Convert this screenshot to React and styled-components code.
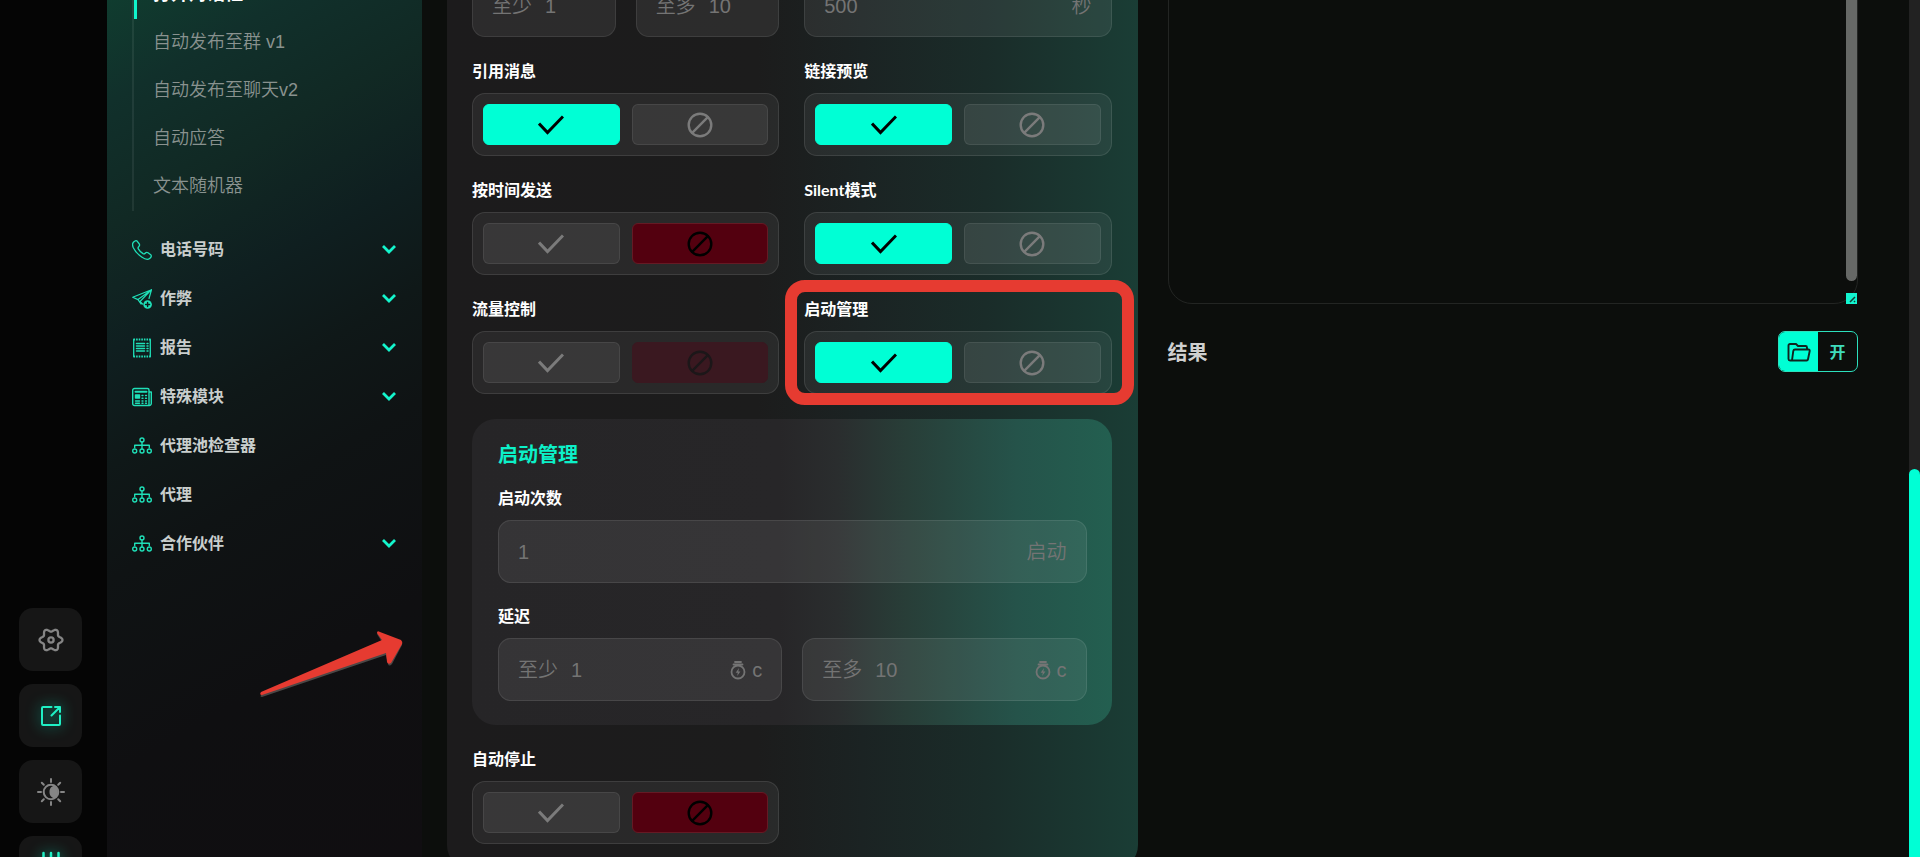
import { useState } from "react";
import styled, { createGlobalStyle, css } from "styled-components";

const GlobalStyle = createGlobalStyle`
  * {
    box-sizing: border-box;
  }
  body {
    margin: 0;
    background: #0c0e0c;
    color: #fff;
    font-family: "Lato", "Noto Sans CJK SC", sans-serif;
    line-height: 1.2;
    overflow: hidden;
  }
  button, input, textarea {
    font-family: inherit;
    line-height: inherit;
    color: inherit;
  }
`;

const thinFont = css`
  font-family: "Liberation Sans", "Noto Sans CJK SC", sans-serif;
  font-weight: 350;
`;

const Page = styled.div`
  display: flex;
  height: 100vh;
  overflow: hidden;
`;

/* left rail */
const Rail = styled.nav`
  flex: 0 0 107px;
  display: flex;
  flex-direction: column;
  justify-content: flex-end;
  background: #050505;
  padding-left: 19px;
`;

const RailList = styled.div`
  display: flex;
  flex-direction: column;
  gap: 13px;
  margin-bottom: -42px;
`;

const RailButton = styled.button`
  display: flex;
  align-items: center;
  justify-content: center;
  width: 63px;
  height: 63px;
  padding: 0;
  border: none;
  border-radius: 14px;
  background: #161616;
  color: ${(props) => (props.$active ? "#1fefc4" : "#858585")};
  cursor: pointer;
  svg {
    filter: ${(props) =>
      props.$active ? "drop-shadow(0 0 7px rgba(0, 255, 210, 0.7))" : "none"};
  }
`;

/* menu */
const Sidebar = styled.aside`
  position: relative;
  flex: 0 0 315px;
  padding: 0 26px 0 25px;
  background: linear-gradient(
    150deg,
    #103c2f 0%,
    #11302b 10%,
    #112924 22%,
    #0f1f20 34%,
    #0f1818 45%,
    #0f1314 56%,
    #0f0f11 75%,
    #100e11 100%
  );
`;

const SubMenu = styled.ul`
  list-style: none;
  margin: -29px 0 14px;
  padding: 0;
  border-left: 2px solid rgba(255, 255, 255, 0.07);
`;

const SubLink = styled.a`
  ${thinFont}
  display: flex;
  align-items: center;
  height: 48px;
  padding-left: 19px;
  font-size: 18px;
  color: #89928f;
  text-decoration: none;
  ${(props) =>
    props.$active &&
    css`
      color: #fff;
      font-weight: 700;
      box-shadow: inset 3px 0 #10f5cb;
    `}
`;

const MenuButton = styled.button`
  display: flex;
  align-items: center;
  width: 100%;
  height: 49px;
  padding: 0;
  border: none;
  background: none;
  font-family: "Liberation Sans", "Noto Sans CJK SC", sans-serif;
  font-size: 16px;
  font-weight: 700;
  color: #c9cecd;
  text-align: left;
  cursor: pointer;
  svg {
    color: #1fe0b8;
  }
`;

const MenuText = styled.span`
  flex: 1;
  margin-left: 8px;
`;

const Arrow = styled.svg`
  position: absolute;
  left: 149px;
  top: 626px;
  width: 152px;
  height: 76px;
`;

/* content */
const Content = styled.main`
  flex: 1;
  display: grid;
  grid-template-columns: 1fr 1fr;
  align-items: start;
  gap: 30px;
  padding: 0 51px 0 25px;
`;

const Form = styled.form`
  display: grid;
  grid-template-columns: 1fr 1fr;
  gap: 25px;
  margin-top: -51px;
  padding: 25px 26px 25px 25px;
  border-radius: 0 0 24px 24px;
  background: linear-gradient(
    90deg,
    #1c1b1c 0%,
    #1c1c1c 45%,
    #1b2323 60%,
    #1a2c29 78%,
    #1a3d35 100%
  );
`;

const Pair = styled.div`
  display: grid;
  grid-template-columns: 1fr 1fr;
  gap: 20px;
`;

const Field = styled.div`
  position: relative;
  min-width: 0;
`;

const Label = styled.div`
  display: block;
  height: 18px;
  margin-bottom: 13px;
  font-size: 16px;
  line-height: 18px;
  font-weight: 700;
`;

const InputBox = styled.label`
  ${thinFont}
  display: flex;
  align-items: center;
  height: 63px;
  padding: 0 19px;
  border: 1px solid rgba(255, 255, 255, 0.09);
  border-radius: 13px;
  background: rgba(255, 255, 255, 0.07);
  font-size: 20px;
  color: #747474;
  svg {
    margin-right: 6px;
  }
`;

const Prefix = styled.span`
  margin-right: 13px;
`;

const TextInput = styled.input`
  flex: 1;
  width: 0;
  min-width: 0;
  padding: 0;
  border: none;
  outline: none;
  background: none;
  font-size: 20px;
`;

const ToggleBox = styled.div`
  display: grid;
  grid-template-columns: 1fr 1fr;
  gap: 12px;
  height: 63px;
  padding: 10px;
  border: 1px solid rgba(255, 255, 255, 0.1);
  border-radius: 13px;
  background: rgba(255, 255, 255, 0.06);
`;

const ToggleButton = styled.button`
  display: flex;
  align-items: center;
  justify-content: center;
  padding: 0;
  border: 1px solid rgba(255, 255, 255, 0.08);
  border-radius: 6px;
  background: rgba(255, 255, 255, 0.07);
  color: #7b7b7b;
  cursor: pointer;
  ${(props) =>
    props.$tone === "on" &&
    css`
      background: #00ffd5;
      border-color: #00ffd5;
      color: #000;
    `}
  ${(props) =>
    props.$tone === "off" &&
    css`
      background: #53000f;
      border-color: #651a24;
      color: #000;
    `}
  ${(props) =>
    props.$tone === "muted" &&
    css`
      background: #3a1820;
      border-color: #3a1820;
      color: #1c1719;
    `}
`;

const Highlight = styled.div`
  position: absolute;
  inset: -20px -22px -11px -19px;
  border: 12px solid #e63b31;
  border-radius: 20px;
  pointer-events: none;
`;

const Panel = styled.section`
  grid-column: 1 / -1;
  display: grid;
  gap: 24px;
  padding: 24px 25px 24px 26px;
  border-radius: 24px;
  background: linear-gradient(
    90deg,
    #262527 0%,
    #272628 48%,
    #2a2d2e 57%,
    #283e38 68%,
    #25534a 85%,
    #235f50 100%
  );
`;

const PanelTitle = styled.h2`
  margin: 0;
  font-size: 20px;
  line-height: 22px;
  font-weight: 700;
  color: #0cf0c8;
`;

/* output */
const Output = styled.section`
  margin-top: -51px;
`;

const LogBox = styled.div`
  position: relative;
  height: 355px;
`;

const LogArea = styled.textarea`
  display: block;
  width: 100%;
  height: 100%;
  padding: 20px;
  border: 1px solid #232523;
  border-radius: 24px;
  outline: none;
  resize: none;
  background: transparent;
`;

const LogThumb = styled.div`
  position: absolute;
  right: 1px;
  top: 0;
  width: 11px;
  height: 332px;
  border-radius: 6px;
  background: #666866;
`;

const Resizer = styled.svg`
  position: absolute;
  right: 1px;
  bottom: 0;
  width: 11px;
  height: 11px;
  background: #12f5d0;
`;

const ResultRow = styled.div`
  display: flex;
  align-items: center;
  justify-content: space-between;
  margin-top: 27px;
`;

const ResultTitle = styled.h3`
  margin: 0;
  font-size: 20px;
  font-weight: 700;
  color: #cfcfcf;
`;

const OpenButton = styled.button`
  display: flex;
  width: 80px;
  height: 41px;
  padding: 0;
  border: 1px solid #2ce0bd;
  border-radius: 7px;
  overflow: hidden;
  background: none;
  font-size: 16px;
  font-weight: 700;
  color: #3fdcbc;
  cursor: pointer;
`;

const OpenPart = styled.span`
  flex: 1;
  display: flex;
  align-items: center;
  justify-content: center;
  height: 100%;
  ${(props) =>
    props.$filled &&
    css`
      background: #00ffd5;
      color: #10241f;
    `}
`;

const PageScroll = styled.div`
  flex: 0 0 11px;
  padding-top: 469px;
  background: #222222;
`;

const PageThumb = styled.div`
  height: 100%;
  border-radius: 6px 6px 0 0;
  background: #00ffd5;
`;

/* icons */
const Svg = ({ size = 20, width, height, sw = 1, children }) => (
  <svg
    width={width || size}
    height={height || size}
    viewBox={`0 0 ${width || size} ${height || size}`}
    fill="none"
    stroke="currentColor"
    strokeWidth={sw}
    strokeLinecap="round"
    strokeLinejoin="round"
    aria-hidden="true"
  >
    {children}
  </svg>
);

const CheckIcon = () => (
  <svg width="26" height="26" viewBox="0 0 26 26" fill="none" stroke="currentColor" strokeWidth="3">
    <path d="M1 11.5 9.5 20.5 25 4.5" />
  </svg>
);

const BanIcon = () => (
  <Svg size={26} sw={2.4}>
    <circle cx="13" cy="13" r="11.3" />
    <path d="M5.2 20.8 20.8 5.2" />
  </Svg>
);

const gearPoints = Array.from({ length: 72 }, (_, i) => {
  const a = (i * Math.PI) / 36;
  const r = 9.9 + 1.6 * Math.cos(6 * a);
  return `${(13 + r * Math.cos(a)).toFixed(2)},${(13 + r * Math.sin(a)).toFixed(2)}`;
}).join(" ");

const GearIcon = () => (
  <Svg size={26} sw={2.3}>
    <polygon points={gearPoints} />
    <circle cx="13" cy="13" r="2.6" />
  </Svg>
);

const ExportIcon = () => (
  <Svg size={22} sw={2}>
    <path d="M11.5 2H3a1 1 0 0 0-1 1v16a1 1 0 0 0 1 1h16a1 1 0 0 0 1-1v-8.5" />
    <path d="M11.5 10.5 20 2M15 2h5v5" />
  </Svg>
);

const SunIcon = () => (
  <Svg size={28} sw={2}>
    <circle cx="14" cy="14" r="7.3" />
    <path
      d="M17.5 7.8a7.3 7.3 0 0 1 0 12.4c-3.500-.5-5-3-5-6.2s1.5-5.7 5-6.2Z"
      fill="currentColor"
      stroke="none"
    />
    <path d="M14 1v3M14 24v3M1 14h3M24 14h3M4.8 4.8l2 2M21.2 21.2l2 2M4.8 23.2l2-2M21.2 6.8l2-2" />
  </Svg>
);

const SlidersIcon = () => (
  <Svg width={20} height={34} sw={2.5}>
    <path d="M2.500 2v15M10 2v8M17.500 2v15M2.500 25v5M10 18v12M17.500 25v5" />
    <circle cx="2.5" cy="21" r="1.5" />
    <circle cx="10" cy="14" r="1.5" />
    <circle cx="17.5" cy="21" r="1.5" />
  </Svg>
);

const PhoneIcon = () => (
  <Svg sw={1.3}>
    <path d="M1.2 2.5C2.500.7 4.300.2 5.300 1.300l2 2.700c.6 1 .3 1.900-.6 2.700-.8.7-.9 1.300-.4 2.200 1 1.800 2.700 3.500 4.700 4.700.9.500 1.500.4 2.200-.4.8-.9 1.800-1.100 2.800-.5l2.700 2c1.100 1 .6 2.600-1 3.800-1.700 1.300-4.700.8-8-1.500C5.500 14 2.500 10.500 1.100 7.200.4 5.300.2 3.800 1.200 2.500Z" />
  </Svg>
);

const PlaneIcon = () => (
  <Svg sw={1.2}>
    <path d="M19.500.7.7 8.300l5.300 2.300L19.500.7 8 12.500l2.500 2.500M6 10.600 9 15M19.500.7 17 9.500" />
    <circle cx="15.6" cy="15.5" r="4.3" fill="currentColor" stroke="none" />
    <path d="M15.600 13.500v4M13.600 15.500h4" stroke="#0f1c1c" strokeWidth="1.400" />
  </Svg>
);

const ReportIcon = () => (
  <Svg sw={1.3}>
    <path d="M1.700 1.500v17M18.300 1.500v17" />
    <path
      d="M1.500 1.500h17M1.500 18.500h17"
      strokeDasharray="1.600 1"
      strokeWidth="2"
      strokeLinecap="butt"
    />
    <path
      d="M4.500 5.500h8M4.500 8h8M4.500 10.500h8M4.500 13h8M15 5.500h1M15 8h1M15 10.500h1M15 13h1"
      strokeWidth="1.500"
    />
  </Svg>
);

const NewsIcon = () => (
  <Svg sw={1.4}>
    <path d="M2.500 1.500h13a1.500 1.500 0 0 1 1.500 1.500v15.500H2.500A1.800 1.800 0 0 1 .7 16.700V3.300a1.800 1.800 0 0 1 1.800-1.800ZM17 5h2.300v11.500a2 2 0 0 1-2.300 2" />
    <path d="M3.500 4.800h11" strokeWidth="2" />
    <rect x="3.5" y="8" width="4" height="3" fill="currentColor" />
    <path
      d="M10 8.500h1M13.500 8.500h1M10 11.200h1M13.500 11.200h1M3.500 14h4M10 14h1M13.500 14h1M3.500 16.300h4M10 16.300h1M13.500 16.300h1"
      strokeWidth="1.400"
    />
  </Svg>
);

const TreeIcon = () => (
  <Svg sw={1.4}>
    <circle cx="10" cy="4" r="2" />
    <circle cx="2.7" cy="15" r="2" />
    <circle cx="10" cy="15" r="2" />
    <circle cx="17.3" cy="15" r="2" />
    <path d="M10 6v7M2.700 11.500V9.300h14.600v2.200" />
  </Svg>
);

const ChevronIcon = () => (
  <svg
    width="14"
    height="14"
    viewBox="0 0 14 14"
    fill="none"
    stroke="#14f5cc"
    strokeWidth="2.8"
    aria-hidden="true"
  >
    <path d="M1 3l6 6 6-6" />
  </svg>
);

const TimerIcon = () => (
  <Svg width={16} height={20} sw={1.8}>
    <circle cx="8" cy="12" r="6.5" />
    <path d="M5 2h6M3.500 4.500h9" />
    <path d="M9 8l-3.300 4.800h2.100L7.200 16l3.200-4.600H8.300Z" fill="currentColor" stroke="none" />
  </Svg>
);

const FolderIcon = () => (
  <Svg width={24} height={20} sw={1.9}>
    <path d="M20 7V5.500a1.500 1.500 0 0 0-1.500-1.500H11L9 2H3a1.500 1.500 0 0 0-1.500 1.500v13.500a1.500 1.500 0 0 0 1.500 1.500h16.500a1.500 1.500 0 0 0 1.500-1.200L22.700 9a1.200 1.200 0 0 0-1.200-1.500H8a1.800 1.800 0 0 0-1.700 1.400L5 18.300" />
  </Svg>
);

const subItems = [
  { text: "打开对话框", active: true },
  { text: "自动发布至群 v1" },
  { text: "自动发布至聊天v2" },
  { text: "自动应答" },
  { text: "文本随机器" },
];

const menuItems = [
  { text: "电话号码", Icon: PhoneIcon, open: true },
  { text: "作弊", Icon: PlaneIcon, open: true },
  { text: "报告", Icon: ReportIcon, open: true },
  { text: "特殊模块", Icon: NewsIcon, open: true },
  { text: "代理池检查器", Icon: TreeIcon },
  { text: "代理", Icon: TreeIcon },
  { text: "合作伙伴", Icon: TreeIcon, open: true },
];

const railItems = [
  { name: "settings", Icon: GearIcon },
  { name: "export", Icon: ExportIcon, active: true },
  { name: "theme", Icon: SunIcon },
  { name: "filters", Icon: SlidersIcon, active: true },
];

const Toggle = ({ id, label, initial, disabled, marked }) => {
  const [on, setOn] = useState(initial);

  return (
    <Field>
      <Label id={id}>{label}</Label>
      <ToggleBox role="group" aria-labelledby={id}>
        <ToggleButton
          type="button"
          aria-label="on"
          aria-pressed={on}
          disabled={disabled}
          $tone={on ? "on" : ""}
          onClick={() => setOn(true)}
        >
          <CheckIcon />
        </ToggleButton>
        <ToggleButton
          type="button"
          aria-label="off"
          aria-pressed={!on}
          disabled={disabled}
          $tone={on ? "" : disabled ? "muted" : "off"}
          onClick={() => setOn(false)}
        >
          <BanIcon />
        </ToggleButton>
      </ToggleBox>
      {marked && <Highlight />}
    </Field>
  );
};

const NumberBox = ({ id, prefix, value, suffix, timer }) => (
  <InputBox htmlFor={id}>
    {prefix && <Prefix>{prefix}</Prefix>}
    <TextInput id={id} type="text" defaultValue={value} />
    {timer && <TimerIcon />}
    <span>{suffix}</span>
  </InputBox>
);

const App = () => {
  return (
    <Page>
      <GlobalStyle />
      <Rail>
        <RailList>
          {railItems.map(({ name, Icon, active }) => (
            <RailButton key={name} type="button" aria-label={name} $active={active}>
              <Icon />
            </RailButton>
          ))}
        </RailList>
      </Rail>

      <Sidebar>
        <SubMenu>
          {subItems.map((item) => (
            <li key={item.text}>
              <SubLink href="#" $active={item.active}>
                {item.text}
              </SubLink>
            </li>
          ))}
        </SubMenu>
        {menuItems.map(({ text, Icon, open }) => (
          <MenuButton key={text} type="button">
            <Icon />
            <MenuText>{text}</MenuText>
            {open && <ChevronIcon />}
          </MenuButton>
        ))}
        <Arrow viewBox="0 0 152 76" aria-hidden="true">
          <path
            d="M6 68 126 16 121 8Q122 5 125 7L145 15Q147 17 146 19L136 38Q133 41 132 38L130 29 6 71Q3 71 6 68Z"
            fill="#4b4746"
          />
          <path
            d="M5 66 126 14 121 7Q121 4 124 6L145 14Q147 16 146 18L135 37Q132 39 131 36L130 27 6 69Q3 69 5 66Z"
            fill="#e63b31"
          />
        </Arrow>
      </Sidebar>

      <Content>
        <Form>
          <Pair>
            <NumberBox id="delay-min" prefix="至少" value="1" />
            <NumberBox id="delay-max" prefix="至多" value="10" />
          </Pair>
          <NumberBox id="timeout" value="500" suffix="秒" />
          <Toggle id="quote" label="引用消息" initial={true} />
          <Toggle id="preview" label="链接预览" initial={true} />
          <Toggle id="schedule" label="按时间发送" initial={false} />
          <Toggle id="silent" label="Silent模式" initial={true} />
          <Toggle id="traffic" label="流量控制" initial={false} disabled />
          <Toggle id="launch" label="启动管理" initial={true} marked />

          <Panel>
            <PanelTitle>启动管理</PanelTitle>
            <Field>
              <Label as="label" htmlFor="launch-count">
                启动次数
              </Label>
              <NumberBox id="launch-count" value="1" suffix="启动" />
            </Field>
            <Field>
              <Label as="label" htmlFor="pause-min">
                延迟
              </Label>
              <Pair>
                <NumberBox id="pause-min" prefix="至少" value="1" suffix="c" timer />
                <NumberBox id="pause-max" prefix="至多" value="10" suffix="c" timer />
              </Pair>
            </Field>
          </Panel>

          <Toggle id="autostop" label="自动停止" initial={false} />
        </Form>

        <Output>
          <LogBox>
            <LogArea aria-label="log" />
            <LogThumb />
            <Resizer viewBox="0 0 11 11" aria-hidden="true">
              <path d="M4 9l5-5M8 9l1-1" stroke="#123c34" strokeWidth="1.5" />
            </Resizer>
          </LogBox>
          <ResultRow>
            <ResultTitle>结果</ResultTitle>
            <OpenButton type="button">
              <OpenPart $filled>
                <FolderIcon />
              </OpenPart>
              <OpenPart>开</OpenPart>
            </OpenButton>
          </ResultRow>
        </Output>
      </Content>

      <PageScroll>
        <PageThumb />
      </PageScroll>
    </Page>
  );
};

export default App;
